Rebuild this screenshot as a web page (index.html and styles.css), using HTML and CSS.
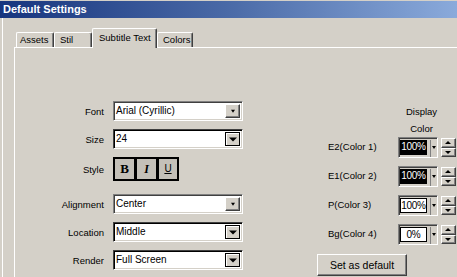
FILE: index.html
```html
<!DOCTYPE html>
<html lang="en">
<head>
    <meta charset="utf-8">
    <title>Default Settings</title>
    <link rel="stylesheet" href="styles.css">
</head>
<body>
    <div class="titlebar">Default Settings</div>

    <div class="frame">
        <div class="tabs">
            <div class="tab w-assets">Assets</div>
            <div class="tab w-stil">Stil</div>
            <div class="tab active">Subtitle Text</div>
            <div class="tab w-colors">Colors</div>
        </div>

        <div class="panel">
            <!-- text settings -->
            <div class="form">
                <div class="row">
                    <span class="lbl">Font</span>
                    <div class="combo flat"><span class="val">Arial (Cyrillic)</span><span class="drop"></span></div>
                </div>
                <div class="row">
                    <span class="lbl">Size</span>
                    <div class="combo dark"><span class="val">24</span><span class="drop"></span></div>
                </div>
                <div class="row row-style">
                    <span class="lbl">Style</span>
                    <div class="stylebtns">
                        <span class="sbtn bold">B</span>
                        <span class="sbtn ital">I</span>
                        <span class="sbtn under">U</span>
                    </div>
                </div>
                <div class="row">
                    <span class="lbl">Alignment</span>
                    <div class="combo flat"><span class="val">Center</span><span class="drop"></span></div>
                </div>
                <div class="row">
                    <span class="lbl">Location</span>
                    <div class="combo dark"><span class="val">Middle</span><span class="drop"></span></div>
                </div>
                <div class="row">
                    <span class="lbl">Render</span>
                    <div class="combo dark"><span class="val">Full Screen</span><span class="drop"></span></div>
                </div>
            </div>

            <!-- display colors -->
            <div class="colors">
                <div class="head">Display<br>Color</div>
                <div class="crow">
                    <span class="clabel">E2(Color 1)</span>
                    <div class="cfield"><span class="cval black">100%</span><span class="cdrop"></span></div>
                    <div class="spin"><span class="up"></span><span class="down"></span></div>
                </div>
                <div class="crow">
                    <span class="clabel">E1(Color 2)</span>
                    <div class="cfield"><span class="cval black">100%</span><span class="cdrop"></span></div>
                    <div class="spin"><span class="up"></span><span class="down"></span></div>
                </div>
                <div class="crow">
                    <span class="clabel">P(Color 3)</span>
                    <div class="cfield"><span class="cval white">100%</span><span class="cdrop"></span></div>
                    <div class="spin"><span class="up"></span><span class="down"></span></div>
                </div>
                <div class="crow">
                    <span class="clabel">Bg(Color 4)</span>
                    <div class="cfield"><span class="cval white">0%</span><span class="cdrop"></span></div>
                    <div class="spin"><span class="up"></span><span class="down"></span></div>
                </div>
                <button class="setdef">Set as default</button>
            </div>
        </div>
    </div>
</body>
</html>
```

FILE: styles.css
```css
/* base */
body {
    margin: 0;
    width: 457px;
    height: 277px;
    overflow: hidden;
    background: #d4d0c8;
    color: #000;
    font-family: "Liberation Sans", Arial, sans-serif;
    font-size: 9.5px;
}

.titlebar {
    margin-top: 1px;
    height: 17px;
    line-height: 17px;
    padding-left: 3px;
    color: #fff;
    font-size: 11px;
    font-weight: bold;
    background: linear-gradient(to right, #17357e, #4a6aa7 50%, #8aaadb);
}

.frame {
    margin-left: 2px;
    padding: 10px 0 0 11px;
    border-left: 1px solid #fff;
    height: 249px;
}

/* tabs */
.tabs {
    display: flex;
    align-items: flex-end;
    height: 19px;
    padding-left: 2px;
    position: relative;
    z-index: 1;
}

.tab {
    box-sizing: border-box;
    height: 15px;
    line-height: 14px;
    padding-left: 4px;
    border: 1px solid #fff;
    border-bottom: none;
    border-right-color: #404040;
    box-shadow: inset -1px 0 #808080;
    border-radius: 2px 2px 0 0;
}

.w-assets { width: 38px; padding-left: 3px; }
.w-stil { width: 38px; padding-left: 5px; }
.w-colors { width: 36px; padding-left: 5px; }

.tab.active {
    width: 65px;
    height: 20px;
    line-height: 17px;
    padding-left: 6px;
    margin-bottom: -1px;
    background: #d4d0c8;
}

.panel {
    display: flex;
    height: 230px;
    border-top: 1px solid #fff;
    border-left: 1px solid #fff;
}

/* left form */
.form {
    display: flex;
    flex-direction: column;
    gap: 8px;
    padding-top: 53px;
}

.row {
    display: flex;
    align-items: center;
    gap: 9px;
}

.row-style {
    margin-bottom: 5px;
}

.lbl {
    width: 89px;
    text-align: right;
}

.combo {
    box-sizing: border-box;
    display: flex;
    width: 130px;
    height: 20px;
    background: #fff;
    border: 1px solid;
    border-color: #808080 #fff #fff #808080;
    box-shadow: inset 1px 1px #404040, inset -1px -1px #d4d0c8;
    font-size: 10px;
}

.combo .val {
    flex: 1;
    line-height: 18px;
    padding-left: 2px;
}

.combo .drop {
    position: relative;
    box-sizing: border-box;
    width: 15px;
    margin: 2px 2px 2px 0;
    background: #d4d0c8;
    border: 1px solid;
    border-color: #fff #404040 #404040 #fff;
    box-shadow: inset -1px -1px #808080;
}

.combo .drop::after {
    content: "";
    position: absolute;
    left: 50%;
    top: 50%;
    transform: translate(-50%, -40%);
    border-style: solid;
    border-color: #000 transparent transparent;
}

.combo.flat .drop::after {
    border-width: 3px 2.5px 0;
}

.combo.dark {
    border-color: #404040 #fff #fff #404040;
    box-shadow: inset 1px 1px #000, inset -1px -1px #d4d0c8;
}

.combo.dark .drop {
    border-color: #000;
    box-shadow: inset 1px 1px #fff;
}

.combo.dark .drop::after {
    border-width: 4px 4px 0;
}

.stylebtns {
    display: flex;
}

.sbtn {
    box-sizing: border-box;
    width: 22px;
    height: 24px;
    line-height: 20px;
    text-align: center;
    background: #c4c0b8;
    border: 2px solid #000;
    border-right-width: 1px;
    font-family: "Liberation Serif", serif;
    font-size: 12px;
}

.sbtn:last-child {
    border-right-width: 2px;
}

.sbtn.bold { font-weight: bold; font-size: 13px; }
.sbtn.ital { font-style: italic; font-weight: bold; }
.sbtn.under { text-decoration: underline; font-family: "Liberation Sans", sans-serif; font-size: 10px; }

/* right colors column */
.colors {
    margin-left: 74px;
    padding-top: 55px;
    display: flex;
    flex-direction: column;
    gap: 8px;
}

.head {
    margin: 0 0 -8px 81px;
    width: 47px;
    line-height: 17px;
    text-align: center;
}

.crow {
    display: flex;
    height: 21px;
}

.clabel {
    width: 70px;
    padding-left: 11px;
    line-height: 19px;
}

.cfield {
    box-sizing: border-box;
    display: flex;
    width: 40px;
    height: 21px;
    padding: 2px 1px 0 1px;
    border: 1px solid;
    border-color: #808080 #fff #fff #808080;
    box-shadow: inset 1px 1px #404040;
}

.cval {
    box-sizing: border-box;
    width: 27px;
    height: 15px;
    line-height: 14px;
    text-align: center;
    white-space: nowrap;
    font-size: 10px;
    letter-spacing: -0.3px;
}

.cval.black {
    background: #000;
    color: #fff;
}

.cval.white {
    background: #fff;
    border: 1px solid #000;
    line-height: 13px;
}

.cdrop {
    position: relative;
    flex: 1;
    margin-left: 3px;
    border-left: 1px solid #808080;
}

.cdrop::after {
    content: "";
    position: absolute;
    left: 1px;
    top: 6px;
    border-style: solid;
    border-width: 3px 2.5px 0;
    border-color: #000 transparent transparent;
}

.spin {
    display: flex;
    flex-direction: column;
    margin: 1px 0 0 3px;
    width: 15px;
    height: 19px;
}

.spin span {
    position: relative;
    box-sizing: border-box;
    flex: 1;
    border: 1px solid;
    border-color: #fff #404040 #404040 #fff;
    box-shadow: inset -1px -1px #808080;
}

.spin span::after {
    content: "";
    position: absolute;
    left: 3px;
    top: 2px;
    border-style: solid;
    border-color: transparent;
}

.spin .up::after {
    border-width: 0 3.5px 3.5px;
    border-bottom-color: #000;
}

.spin .down::after {
    border-width: 3.5px 3.5px 0;
    border-top-color: #000;
}

.setdef {
    align-self: flex-start;
    width: 90px;
    height: 22px;
    margin-top: 1px;
    padding: 0;
    background: #d4d0c8;
    border: 1px solid;
    border-color: #fff #404040 #404040 #fff;
    box-shadow: inset -1px -1px #808080;
    font-family: "Liberation Sans", Arial, sans-serif;
    font-size: 10.5px;
    color: #000;
}
```
